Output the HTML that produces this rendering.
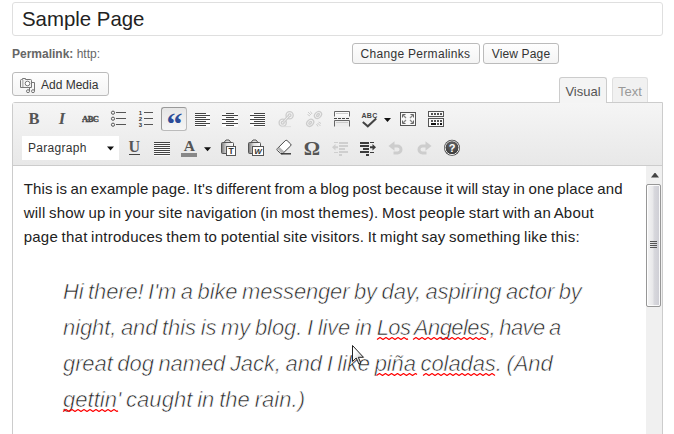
<!DOCTYPE html>
<html>
<head>
<meta charset="utf-8">
<title>Sample Page</title>
<style>
html,body{margin:0;padding:0;}
body{width:674px;height:434px;overflow:hidden;background:#fff;font-family:"Liberation Sans",sans-serif;font-size:12px;color:#333;position:relative;}
.abs{position:absolute;box-sizing:border-box;}
#title{left:12px;top:2px;width:651px;height:34px;border:1px solid #dfdfdf;border-radius:3px;background:#fff;font-size:20.4px;line-height:33px;padding-left:9px;color:#222;white-space:nowrap;}
#perma{left:12px;top:47px;font-size:12px;line-height:14px;color:#666;white-space:nowrap;}
#perma b{font-weight:bold;}
.btn{border:1px solid #bbb;border-radius:3px;background:linear-gradient(#fefefe,#f4f4f4);color:#333;font-size:12px;line-height:21px;text-align:center;white-space:nowrap;}
#addmedia{left:12px;top:72px;width:97px;height:24px;line-height:24px;text-align:left;padding-left:28px;}
#tabV{left:559px;top:77px;width:48px;height:26px;border:1px solid #ccc;border-bottom:none;border-radius:3px 3px 0 0;background:#f4f4f4;color:#555;font-size:13px;line-height:27px;text-align:center;z-index:3;}
#tabT{left:612px;top:77px;width:36px;height:25px;border:1px solid #dfdfdf;border-bottom:none;border-radius:3px 3px 0 0;background:#f1f1f1;color:#999;font-size:13px;line-height:27px;text-align:center;}
#ed{left:12px;top:102px;width:651px;height:340px;border:1px solid #ccc;border-radius:3px 0 0 0;background:#fff;}
#tb{left:13px;top:103px;width:649px;height:63px;background:linear-gradient(#f5f5f5,#e8e8e8);border-bottom:1px solid #ccc;}
#content{left:13px;top:166px;width:633px;height:268px;background:#fff;overflow:hidden;}
#sb{left:646px;top:166px;width:16px;height:268px;background:#f0f0f0;}
#thumb{left:646px;top:184px;width:15px;height:123px;border:1px solid #979797;border-radius:2px;background:linear-gradient(90deg,#f5f5f5 0,#e8e8ea 45%,#d8d8dd 55%,#cdcdd4 100%);box-shadow:inset 0 0 0 1px rgba(255,255,255,0.85);}
.l{position:absolute;word-spacing:-0.9px;left:10.7px;font-size:15px;line-height:24px;color:#222;white-space:nowrap;}
.q{position:absolute;word-spacing:-1.3px;left:50px;font-size:22px;line-height:36px;color:#222;font-style:italic;white-space:nowrap;-webkit-text-stroke:0.6px #fff;}
#sel{left:22px;top:136px;width:97px;height:24px;background:#fff;font-size:12px;line-height:25px;padding-left:6px;color:#333;letter-spacing:0.3px;}
#qb{left:161px;top:107px;width:26px;height:24px;border:1px solid #bbb;border-top-color:#999;border-left-color:#999;border-radius:3px;background:linear-gradient(#e6e6e6,#f6f6f6);}
svg text{font-family:"Liberation Serif",serif;}
</style>
</head>
<body>
<div class="abs" id="title">Sample Page</div>
<div class="abs" id="perma"><b>Permalink:</b> http:</div>
<div class="abs btn" style="left:352px;top:43px;width:128px;height:21px;letter-spacing:0.3px;padding-right:1px;">Change Permalinks</div>
<div class="abs btn" style="left:483px;top:43px;width:76px;height:21px;letter-spacing:0.15px;">View Page</div>
<div class="abs btn" id="addmedia">Add Media</div>
<div class="abs" id="tabV">Visual</div>
<div class="abs" id="tabT">Text</div>
<div class="abs" id="ed"></div>
<div class="abs" id="tb"></div>
<div class="abs" id="sel">Paragraph</div>
<div class="abs" id="qb"></div>
<div class="abs" id="content">
<div class="l" style="top:11px;letter-spacing:0.13px">This is an example page. It's different from a blog post because it will stay in one place and</div>
<div class="l" style="top:35px;letter-spacing:0.235px">will show up in your site navigation (in most themes). Most people start with an About</div>
<div class="l" style="top:59px;letter-spacing:0.25px">page that introduces them to potential site visitors. It might say something like this:</div>
<div class="q" style="top:108px;letter-spacing:-0.16px">Hi there! I'm a bike messenger by day, aspiring actor by</div>
<div class="q" style="top:144px;letter-spacing:-0.095px">night, and this is my blog. I live in <span style="letter-spacing:-0.56px">Los Angeles, have a</span></div>
<div class="q" style="top:180px;letter-spacing:-0.10px">great dog named Jack, and I like piña coladas. (And</div>
<div class="q" style="top:216px;letter-spacing:0.03px">gettin' caught in the rain.)</div>
</div>
<div class="abs" id="sb"></div>
<div class="abs" id="thumb"></div>
<svg class="abs" id="ico" style="left:0;top:0;z-index:5" width="674" height="434" viewBox="0 0 674 434">
<!-- add media icon -->
<g fill="none" stroke="#777" stroke-width="1">
<path d="M20.5 87.5V80.5q0-1 1-1h1v-1h3v1h5q1 0 1 1v7z" fill="#f2f2f2"/>
<path d="M22.8 80v7" stroke="#bbb" stroke-width="1.6"/>
<circle cx="27.5" cy="83.5" r="2.3" fill="#fff"/>
<circle cx="28" cy="91.2" r="1.5"/>
<circle cx="33" cy="91.2" r="1.5"/>
<path d="M29.5 91V88M34.5 91V82.5H32"/>
</g>
<!-- row 1 text icons -->
<g fill="#555" font-weight="bold" text-anchor="middle">
<text x="34" y="124" font-size="16.5">B</text>
<text x="62" y="124" font-size="16.5" font-style="italic">I</text>
<text x="90.300" y="122" font-size="8.500" letter-spacing="-0.500" fill="#444" stroke="#444" stroke-width="0.350">ABC</text>
</g>
<path d="M82 119.500h16.500" stroke="#666" stroke-width="0.800"/>
<!-- bullet list -->
<g fill="none" stroke="#555" stroke-width="1">
<circle cx="113" cy="112.7" r="1.6"/><circle cx="113" cy="118.7" r="1.6"/><circle cx="113" cy="124.7" r="1.6"/>
<path d="M116 112.5h10M116 118.5h10M116 124.5h10M144 112.5h9M144 118.5h9M144 124.5h9"/>
</g>
<g fill="#333" font-weight="bold" font-size="6" text-anchor="middle" style="font-family:'Liberation Sans',sans-serif">
<text x="140.500" y="115" style="font-family:'Liberation Sans',sans-serif">1</text>
<text x="140.500" y="121" style="font-family:'Liberation Sans',sans-serif">2</text>
<text x="140.500" y="127" style="font-family:'Liberation Sans',sans-serif">3</text>
</g>
<!-- blockquote glyph -->
<text x="174.500" y="135.200" font-size="32" font-weight="bold" fill="#2c4b98" text-anchor="middle">“</text>
<!-- align -->
<g fill="#fff" opacity="0.8"><rect x="195" y="113" width="15" height="14"/><rect x="222" y="113" width="16" height="14"/><rect x="250" y="113" width="15" height="14"/><rect x="154" y="142" width="16" height="14"/></g>
<g stroke="#444" stroke-width="1" fill="none">
<path d="M195 113.5h11M195 115.5h15M195 117.5h11M195 119.5h15M195 121.5h11M195 123.5h15M195 125.5h11"/>
<path d="M226 113.5h8M222 115.5h16M226 117.5h8M222 119.5h16M226 121.5h8M222 123.5h16M226 125.5h8"/>
<path d="M254 113.5h11M250 115.5h15M254 117.5h11M250 119.5h15M254 121.5h11M250 123.5h15M254 125.5h11"/>
<path d="M154 142.500h16M154 144.500h16M154 146.500h16M154 148.500h16M154 150.500h16M154 152.500h16M154 154.500h16"/>
</g>
<!-- link (disabled) -->
<g stroke="#cdcdcd" fill="none" stroke-width="1.3">
<circle cx="282.7" cy="122.8" r="3.6"/><circle cx="289.6" cy="115.2" r="3.6"/>
<circle cx="282.7" cy="122.8" r="1.4"/><circle cx="289.6" cy="115.2" r="1.4"/>
<path d="M283.7 121.8l4.9-5.6" stroke-width="3"/>
<path d="M283.7 121.8l4.9-5.6" stroke="#f0f0f0" stroke-width="1"/>
<path d="M281 126.7h10" stroke="#ddd" stroke-width="1"/>
</g>
<!-- unlink (disabled) -->
<g stroke="#cdcdcd" fill="none" stroke-width="1.3">
<ellipse cx="310.2" cy="122.8" rx="3.9" ry="3" transform="rotate(-45 310.2 122.8)"/>
<ellipse cx="318" cy="115" rx="3.9" ry="3" transform="rotate(-45 318 115)"/>
<ellipse cx="310.2" cy="122.8" rx="1.7" ry="1" transform="rotate(-45 310.2 122.8)"/>
<ellipse cx="318" cy="115" rx="1.7" ry="1" transform="rotate(-45 318 115)"/>
<path d="M308 112l3 3M310.5 111.5l1.5 2.5M307.5 114.5l2.5 1.5M320.5 126l-3-3M318 126.5l-1.5-2.5M321 123.500l-2.500-1.500" stroke-width="1"/>
</g>
<!-- more -->
<g fill="none" stroke="#666" stroke-width="1">
<path d="M334.500 116.500V111.500H349.500V116.500" fill="#fafafa"/>
<path d="M336 113.500h12" stroke="#ccc"/>
<path d="M334 118.500h16" stroke="#444" stroke-dasharray="3 1"/>
<path d="M334.500 126.500V120.500H349.500V126.500" fill="#ececec"/>
<path d="M336 122.500h12" stroke="#ccc"/>
</g>
<!-- spellcheck -->
<text x="369.500" y="117.500" font-size="7" font-weight="bold" fill="#444" text-anchor="middle" letter-spacing="0.300" style="font-family:'Liberation Sans',sans-serif">ABC</text>
<path d="M362.800 122l5 4.300l8.400-7.800" fill="none" stroke="#444" stroke-width="2"/>
<path d="M384 118h7l-3.500 4z" fill="#111"/>
<!-- fullscreen -->
<g fill="none" stroke="#555" stroke-width="1">
<rect x="400.500" y="112.500" width="15" height="13" fill="#fafafa"/>
<path d="M403 115l3 3M413 115l-3 3M403 123l3-3M413 123l-3-3" stroke="#888" stroke-width="1.300"/>
<path d="M402.500 117.500v-3h3M413.500 117.500v-3h-3M402.500 120.500v3h3M413.500 120.500v3h-3" stroke="#666"/>
</g>
<!-- kitchen sink -->
<g fill="none" stroke="#555" stroke-width="1">
<rect x="428.500" y="111.500" width="15" height="5" fill="#fafafa"/>
<rect x="428.500" y="118.500" width="15" height="8" fill="#fafafa"/>
</g>
<g fill="#555">
<rect x="431" y="113" width="2" height="2"/><rect x="434" y="113" width="2" height="2"/><rect x="437" y="113" width="2" height="2"/><rect x="440" y="113" width="2" height="2"/>
<rect x="431" y="120" width="2" height="2"/><rect x="434" y="120" width="2" height="2"/><rect x="437" y="120" width="2" height="2"/><rect x="440" y="120" width="2" height="2"/>
<rect x="431" y="123" width="5" height="2" fill="#111"/><rect x="437" y="123" width="2" height="2"/><rect x="440" y="123" width="2" height="2" fill="#111"/>
</g>
<!-- select arrow -->
<path d="M107 146.500h7l-3.500 4z" fill="#111"/>
<!-- U -->
<text x="134.300" y="152" font-size="16" font-weight="bold" fill="#555" text-anchor="middle">U</text>
<path d="M129 154.500h11" stroke="#444" stroke-width="1"/>
<!-- A color -->
<text x="189.400" y="150.500" font-size="15.500" font-weight="bold" fill="#555" text-anchor="middle">A</text>
<rect x="181" y="153" width="16" height="4" fill="#888"/>
<path d="M204 147.300h7l-3.500 4z" fill="#111"/>
<!-- paste text -->
<g id="clip">
<linearGradient id="cg" x1="0" x2="1" y1="0" y2="0"><stop offset="0" stop-color="#777"/><stop offset="0.450" stop-color="#e4e4e4"/><stop offset="1" stop-color="#fff"/></linearGradient>
<path d="M224 142.500l2-2.500h3l2 2.500z" fill="#ddd" stroke="#555"/>
<rect x="221.500" y="142.500" width="12" height="11" rx="1" fill="url(#cg)" stroke="#555"/>
<rect x="226.500" y="146.500" width="9" height="9" fill="#fff" stroke="#555"/>
</g>
<text x="231" y="154" font-size="8.500" font-weight="bold" fill="#333" text-anchor="middle" style="font-family:'Liberation Sans',sans-serif">T</text>
<g>
<path d="M251 142.500l2-2.500h3l2 2.500z" fill="#ddd" stroke="#555"/>
<rect x="248.500" y="142.500" width="12" height="11" rx="1" fill="url(#cg)" stroke="#555"/>
<rect x="252.500" y="146.500" width="11" height="9" fill="#fff" stroke="#555"/>
</g>
<text x="258" y="154" font-size="8" font-weight="bold" font-style="italic" fill="#333" text-anchor="middle" style="font-family:'Liberation Sans',sans-serif">W</text>
<!-- eraser -->
<path d="M277.300 148.600l8-8q0.900-0.700 1.800 0l3.600 3.400q0.700 0.900 0 1.800l-8 7.800h-1.800l-3.600-3.200q-0.700-0.900 0-1.800z" fill="#fff" stroke="#444" stroke-width="1"/>
<path d="M277.400 149l4 4h1.200l1.600-1.600-4.800-4.400z" fill="#b5b5b5"/>
<path d="M281 153.800h10" stroke="#333" stroke-width="1.400"/>
<!-- omega -->
<text transform="translate(312 154.600) scale(1.090 1)" x="0" y="0" font-size="18.700" font-weight="bold" fill="#555" text-anchor="middle">Ω</text>
<!-- outdent (disabled) -->
<g fill="#cfcfcf">
<rect x="339" y="142" width="9" height="2"/><rect x="339" y="145" width="9" height="2"/><rect x="339" y="148" width="6" height="2"/><rect x="339" y="151" width="9" height="2"/><rect x="339" y="154" width="3" height="2"/>
<path d="M332 147.300l3.500-3.300v2.300h2.500v2h-2.500v2.300z"/>
<rect x="334" y="142" width="4" height="1"/><rect x="334" y="152" width="4" height="1"/>
</g>
<!-- indent -->
<g fill="#3c3c3c">
<rect x="360" y="142" width="9" height="2"/><rect x="360" y="145" width="9" height="2"/><rect x="363" y="148" width="6" height="2"/><rect x="360" y="151" width="9" height="2"/><rect x="366" y="154" width="3" height="2"/>
<path d="M376 147.300l-3.500-3.300v2.300h-2.500v2h2.500v2.300z"/>
<rect x="370" y="142" width="4" height="1"/><rect x="370" y="152" width="4" height="1"/>
</g>
<!-- undo / redo (disabled) -->
<g fill="none" stroke="#cdcdcd" stroke-width="3">
<path d="M393 146h4.500a3.500 3.500 0 0 1 0 7h-4"/>
<path d="M427 146h-4.500a3.500 3.500 0 0 0 0 7h4"/>
</g>
<path d="M388.500 146l6-4.800v9.600z" fill="#cdcdcd"/>
<path d="M431.500 146l-6-4.800v9.600z" fill="#cdcdcd"/>
<!-- help -->
<radialGradient id="hg" cx="0.500" cy="0.300" r="0.800"><stop offset="0" stop-color="#6a6a6a"/><stop offset="1" stop-color="#333"/></radialGradient>
<circle cx="452" cy="147.800" r="8" fill="#444"/>
<circle cx="452" cy="147.800" r="6.800" fill="none" stroke="#fff" stroke-width="0.900"/>
<circle cx="452" cy="147.800" r="6.200" fill="url(#hg)"/>
<text x="452" y="151.800" font-size="11" font-weight="bold" fill="#fff" text-anchor="middle" style="font-family:'Liberation Sans',sans-serif">?</text>
<!-- scrollbar -->
<path d="M651 177.500l3.500-4.500h1l3.500 4.500z" fill="#444"/>
<path d="M650 241.500h7M650 243.500h7M650 245.500h7M650 247.500h7" stroke="#555" stroke-width="1"/>
<!-- spellcheck squiggles -->
<path d="M377 339.5l3 -2.00l3 2.00l3 -2.00l3 2.00l3 -2.00l3 2.00l3 -2.00l3 2.00l3 -2.00l3 2.00l1 -0.67M413 339.5l3 -2.00l3 2.00l3 -2.00l3 2.00l3 -2.00l3 2.00l3 -2.00l3 2.00l3 -2.00l3 2.00l3 -2.00l3 2.00l3 -2.00l3 2.00l3 -2.00l3 2.00l3 -2.00l3 2.00l3 -2.00l3 2.00l3 -2.00l3 2.00l3 -2.00l3 2.00l1 -0.67M376.5 375.5l3 -2.00l3 2.00l3 -2.00l3 2.00l3 -2.00l3 2.00l3 -2.00l3 2.00l3 -2.00l3 2.00l3 -2.00l3 2.00l3 -2.00l1.5 1.00M423 375.5l3 -2.00l3 2.00l3 -2.00l3 2.00l3 -2.00l3 2.00l3 -2.00l3 2.00l3 -2.00l3 2.00l3 -2.00l3 2.00l3 -2.00l3 2.00l3 -2.00l3 2.00l3 -2.00l3 2.00l3 -2.00l3 2.00l3 -2.00l3 2.00l3 -2.00l3 2.00M63 411.5l3 -2.00l3 2.00l3 -2.00l3 2.00l3 -2.00l3 2.00l3 -2.00l3 2.00l3 -2.00l3 2.00l3 -2.00l3 2.00l3 -2.00l3 2.00l3 -2.00l3 2.00l3 -2.00l3 2.00l1 -0.67" fill="none" stroke="#f00" stroke-width="1.2" stroke-linejoin="round"/>
<!-- mouse cursor -->
<linearGradient id="mg" x1="0" x2="1" y1="0" y2="1"><stop offset="0.3" stop-color="#fff"/><stop offset="1" stop-color="#bbb"/></linearGradient>
<path d="M352.500 345.500v16l3.700-3.500l2.700 6l2-0.900l-2.600-5.800h5.200z" fill="url(#mg)" stroke="#222" stroke-width="1"/>
</svg>
</body>
</html>
